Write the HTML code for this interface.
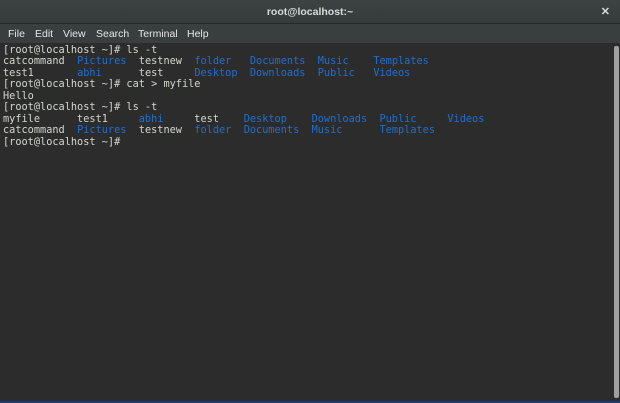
<!DOCTYPE html>
<html><head><style>
html,body{margin:0;padding:0;width:620px;height:403px;overflow:hidden;background:#2c2c2c}
.title{position:absolute;left:0;top:0;width:620px;height:23px;background:linear-gradient(#3d4343,#353a3a);border-bottom:1px solid #262828;color:#d8dcd8;font:bold 10.5px "Liberation Sans",sans-serif;text-align:center;line-height:24px}
.title .x{position:absolute;right:10px;top:0;font-size:11px}
.menu{position:absolute;left:0;top:24px;width:620px;height:19px;background:#393f3f;border-bottom:1px solid #2a2d2d;color:#e6e6e6;font:10.5px "Liberation Sans",sans-serif;line-height:20px}
.menu span{position:absolute}
.term{position:absolute;left:0;top:44px;width:612px;height:357px;background:#2c2c2c}
pre{margin:0;position:absolute;left:3px;top:0.5px;font:10.25px "DejaVu Sans Mono",monospace;line-height:11.55px;color:#d3d7cf}
b{font-weight:normal;color:#1f6fd2}
.sb{position:absolute;left:614px;top:46px;width:5px;height:352px;background:#a0a0a0;border-radius:2px}
.bot{position:absolute;left:0;top:401px;width:620px;height:2px;background:#1d3d6a}
</style></head><body>
<div class="title">root@localhost:~<span class="x">✕</span></div>
<div class="menu"><span style="left:8px">File</span><span style="left:35px">Edit</span><span style="left:63px">View</span><span style="left:96px">Search</span><span style="left:138px">Terminal</span><span style="left:187px">Help</span></div>
<div class="term"><pre>[root@localhost ~]# ls -t
catcommand  <b>Pictures</b>  testnew  <b>folder</b>   <b>Documents</b>  <b>Music</b>    <b>Templates</b>
test1       <b>abhi</b>      test     <b>Desktop</b>  <b>Downloads</b>  <b>Public</b>   <b>Videos</b>
[root@localhost ~]# cat &gt; myfile
Hello
[root@localhost ~]# ls -t
myfile      test1     <b>abhi</b>     test    <b>Desktop</b>    <b>Downloads</b>  <b>Public</b>     <b>Videos</b>
catcommand  <b>Pictures</b>  testnew  <b>folder</b>  <b>Documents</b>  <b>Music</b>      <b>Templates</b>
[root@localhost ~]# </pre></div>
<div class="sb"></div>
<div class="bot"></div>
</body></html>
